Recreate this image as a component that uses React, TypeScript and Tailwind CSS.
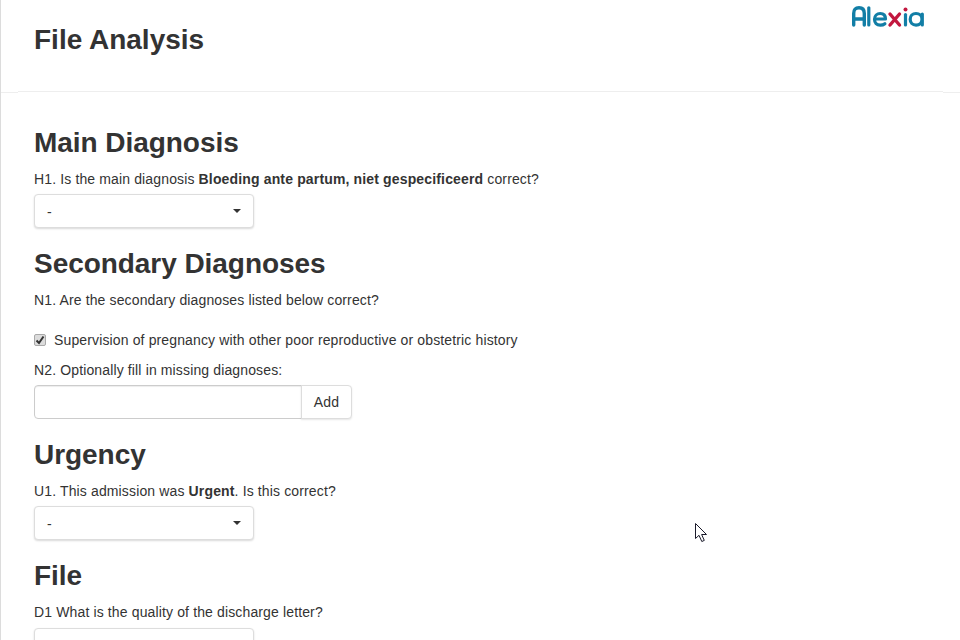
import React from "react";

function Caret() {
  return (
    <span className="absolute right-[12px] top-[14px] w-0 h-0 border-x-[4px] border-x-transparent border-t-[4px] border-t-[#333]" />
  );
}

function Select({ label = "-" }: { label?: string }) {
  return (
    <div className="relative w-[220px] h-[34px] bg-white border border-[#dddddd] rounded-[4px] shadow-[0_1px_2px_rgba(0,0,0,0.15)] pl-[12px] leading-[34px] text-[14px] text-[#333]">
      {label}
      <Caret />
    </div>
  );
}

function Heading({ children }: { children: React.ReactNode }) {
  return <h2 className="text-[28px] leading-[34px] font-bold text-[#333] -tracking-[0.05px]">{children}</h2>;
}

function Strong({ children }: { children: React.ReactNode }) {
  return <b className="tracking-[0.15px]">{children}</b>;
}

function Logo() {
  return (
    <svg width="74" height="24" viewBox="0 0 74 24" fill="none" strokeLinecap="round" strokeLinejoin="round">
      <path d="M2.700 21V9.500C2.700 5.500 4.500 3.800 8 3.800S13.300 5.500 13.300 9.500V21M3 15h10" stroke="#127ea6" strokeWidth="3.400" />
      <path d="M17.800 3.800V21" stroke="#127ea6" strokeWidth="3.200" />
      <path d="M23.500 15h11c0-3.600-2.200-5.500-5.300-5.500S23.500 11.800 23.500 15.300s2.300 5.900 5.700 5.900c2 0 3.600-.6 4.700-1.500" stroke="#127ea6" strokeWidth="3.200" />
      <path d="M39 10L48.500 21M48.500 10L39 21" stroke="#c2173f" strokeWidth="3.400" />
      <path d="M54.500 10.500V21" stroke="#127ea6" strokeWidth="3.200" />
      <circle cx="54.500" cy="5.500" r="2" fill="#c2173f" />
      <path d="M71 15.300c0 3.400-2.500 5.800-6 5.800s-5.800-2.400-5.800-5.800 2.300-5.800 5.800-5.800 6 2.400 6 5.800zM71.300 10v11" stroke="#127ea6" strokeWidth="3.200" />
    </svg>
  );
}

function Cursor() {
  return (
    <svg className="absolute left-[694px] top-[523px]" width="13" height="20" viewBox="0 0 13 20">
      <path d="M.5.500V15.500L4 12.300 6.800 18.500 9.300 17.400 6.600 11.500H11.500Z" fill="#fff" stroke="#1a1a2a" strokeWidth="1" />
    </svg>
  );
}

function CheckBox() {
  return (
    <span className="flex items-center justify-center w-[12px] h-[12px] shrink-0 rounded-[2px] border border-[#a9a9a9] bg-[#dcdcdc]">
      <svg width="10" height="10" viewBox="0 0 10 10" fill="none">
        <path d="M1.500 5.500L4 8 8.500 1.500" stroke="#333" strokeWidth="2" />
      </svg>
    </span>
  );
}

export default function App() {
  return (
    <div className="relative h-[640px] w-[960px] overflow-hidden bg-white border-l border-[#dcdcdc] text-[14px] leading-[20px] text-[#333] tracking-[0.135px] font-['Liberation_Sans',Arial,sans-serif]">
      <header className="flex justify-between h-[91px] pl-[33px] pr-[35px]">
        <h1 className="mt-[23px] text-[28px] leading-[34px] font-bold text-[#333] tracking-normal">File Analysis</h1>
        <div className="mt-[4px]">
          <Logo />
        </div>
      </header>
      <div className="flex h-[2px]">
        <div className="w-[17px] mt-[1px] border-t border-[#eeeeee]" />
        <div className="w-[925px] border-t border-[#eeeeee]" />
        <div className="flex-1 mt-[1px] border-t border-[#eeeeee]" />
      </div>
      <main className="pl-[33px] pt-[33px]">
        <Heading>Main Diagnosis</Heading>
        <p className="mt-[9px]">
          H1. Is the main diagnosis <Strong>Bloeding ante partum, niet gespecificeerd</Strong> correct?
        </p>
        <div className="mt-[5px]">
          <Select />
        </div>
        <div className="mt-[19px]">
          <Heading>Secondary Diagnoses</Heading>
        </div>
        <p className="mt-[9px]">N1. Are the secondary diagnoses listed below correct?</p>
        <label className="mt-[20px] flex items-center h-[20px]">
          <CheckBox />
          <span className="ml-[8px]">Supervision of pregnancy with other poor reproductive or obstetric history</span>
        </label>
        <p className="mt-[10px]">N2. Optionally fill in missing diagnoses:</p>
        <div className="mt-[5px] flex w-[318px] h-[34px]">
          <div className="w-[268px] bg-white border border-[#cccccc] rounded-l-[4px] shadow-[inset_0_1px_1px_rgba(0,0,0,0.075)]" />
          <button className="w-[51px] -ml-px bg-white border border-[#dddddd] rounded-r-[4px] shadow-[0_1px_2px_rgba(0,0,0,0.1)] text-[14px] text-[#333]">
            Add
          </button>
        </div>
        <div className="mt-[19px]">
          <Heading>Urgency</Heading>
        </div>
        <p className="mt-[9px]">
          U1. This admission was <Strong>Urgent</Strong>. Is this correct?
        </p>
        <div className="mt-[5px]">
          <Select />
        </div>
        <div className="mt-[19px]">
          <Heading>File</Heading>
        </div>
        <p className="mt-[9px]">D1 What is the quality of the discharge letter?</p>
        <div className="mt-[6px]">
          <Select label="" />
        </div>
      </main>
      <Cursor />
    </div>
  );
}
